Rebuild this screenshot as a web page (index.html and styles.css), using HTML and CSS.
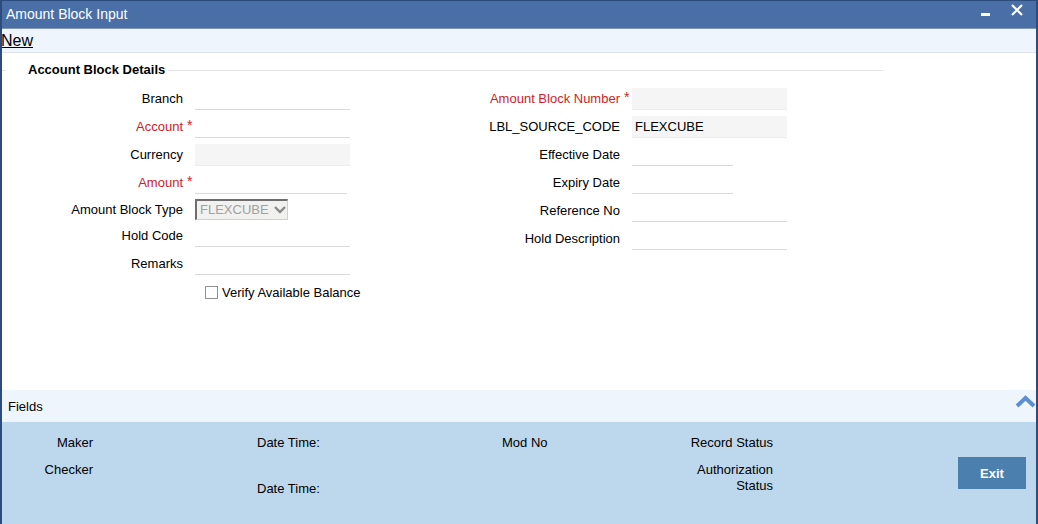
FILE: index.html
```html
<!DOCTYPE html>
<html>
<head>
<meta charset="utf-8">
<link rel="stylesheet" href="styles.css">
</head>
<body>
<div class="window">
  <div class="titlebar">
    <span class="title">Amount Block Input</span>
    <div class="controls">
      <span class="min"></span>
      <svg class="close" width="12" height="12" viewBox="0 0 12 12"><path d="M1 1 L11 11 M11 1 L1 11" stroke="#fff" stroke-width="2.2" fill="none"/></svg>
    </div>
  </div>
  <div class="toolbar"><a class="new">New</a></div>
  <div class="main">
    <div class="legend-row">
      <span class="lead-line"></span>
      <span class="legend">Account Block Details</span>
      <span class="tail-line"></span>
    </div>
    <div class="form">
      <div class="col col1">
        <div class="row"><label class="lbl">Branch</label><span class="star"></span><span class="inp"></span></div>
        <div class="row"><label class="lbl req">Account</label><span class="star">*</span><span class="inp"></span></div>
        <div class="row"><label class="lbl">Currency</label><span class="star"></span><span class="inp ro"></span></div>
        <div class="row"><label class="lbl req">Amount</label><span class="star">*</span><span class="inp short"></span></div>
        <div class="row row-sel"><label class="lbl">Amount Block Type</label><span class="star"></span><span class="select">FLEXCUBE<svg class="caret" width="14" height="10" viewBox="0 0 14 10"><path d="M2 2 L7 7 L12 2" stroke="#8a8a8a" stroke-width="2.4" fill="none"/></svg></span></div>
        <div class="row"><label class="lbl">Hold Code</label><span class="star"></span><span class="inp"></span></div>
        <div class="row"><label class="lbl">Remarks</label><span class="star"></span><span class="inp"></span></div>
        <div class="row"><span class="lbl"></span><span class="star"></span><span class="check"><span class="box"></span>Verify Available Balance</span></div>
      </div>
      <div class="col col2">
        <div class="row"><label class="lbl req">Amount Block Number</label><span class="star">*</span><span class="inp ro"></span></div>
        <div class="row"><label class="lbl">LBL_SOURCE_CODE</label><span class="star"></span><span class="inp ro val">FLEXCUBE</span></div>
        <div class="row"><label class="lbl">Effective Date</label><span class="star"></span><span class="inp date"></span></div>
        <div class="row"><label class="lbl">Expiry Date</label><span class="star"></span><span class="inp date"></span></div>
        <div class="row"><label class="lbl">Reference No</label><span class="star"></span><span class="inp"></span></div>
        <div class="row"><label class="lbl">Hold Description</label><span class="star"></span><span class="inp"></span></div>
      </div>
    </div>
  </div>
  <div class="fields-band">
    <span class="fields">Fields</span>
    <svg class="chev" width="21" height="14" viewBox="0 0 21 14"><path d="M2 12 L10.5 4 L19 12" stroke="#5b8fcf" stroke-width="4" fill="none"/></svg>
  </div>
  <div class="footer">
    <div class="fcol fa"><div>Maker</div><div class="mt11">Checker</div></div>
    <div class="fcol fb"><div>Date Time:</div><div class="mt30">Date Time:</div></div>
    <div class="fcol fc"><div>Mod No</div></div>
    <div class="fcol fd"><div>Record Status</div><div class="mt11">Authorization<br>Status</div></div>
    <button class="exit">Exit</button>
  </div>
</div>
</body>
</html>
```

FILE: styles.css
```css
* { box-sizing: border-box; }
html, body { margin: 0; padding: 0; }
body {
  font-family: "Liberation Sans", Arial, sans-serif;
  font-size: 13px;
  color: #000;
  background: #fff;
}
.window {
  width: 1038px;
  height: 524px;
  display: flex;
  flex-direction: column;
  border-left: 2px solid #2b4c7c;
  border-right: 2px solid #2b4c7c;
  overflow: hidden;
}
.titlebar {
  height: 29px;
  background: #4a6fa6;
  border-top: 1px solid #2b4c7c;
  border-bottom: 1px solid #8397b2;
  display: flex;
  align-items: flex-start;
  justify-content: space-between;
  color: #fff;
}
.title {
  font-size: 14px;
  line-height: 16px;
  margin-top: 5px;
  margin-left: 4px;
}
.controls {
  display: flex;
  align-items: flex-start;
  margin-right: 13px;
}
.min {
  width: 9px;
  height: 3px;
  background: #fff;
  margin-top: 12px;
  margin-right: 21px;
}
.close { margin-top: 3px; display: block; }
.toolbar {
  height: 24px;
  background: #eef5fd;
  border-bottom: 1px solid #e0e4ea;
  display: flex;
  align-items: center;
}
.new {
  font-size: 16px;
  text-decoration: underline;
  line-height: 18px;
  margin-left: -1px;
  color: #000;
}
.main {
  flex: 1;
  padding-top: 9px;
}
.legend-row {
  width: 881px;
  height: 16px;
  display: flex;
  align-items: center;
}
.lead-line, .tail-line {
  height: 1px;
  background: #e4e4e4;
}
.lead-line { width: 3px; }
.tail-line { flex: 1; }
.legend {
  font-weight: bold;
  padding-left: 23px;
  padding-right: 3px;
  line-height: 16px;
}
.form {
  display: flex;
  margin-top: 7px;
}
.col {
  display: flex;
  flex-direction: column;
}
.row {
  display: grid;
  height: 28px;
  align-items: center;
}
.col1 .row { grid-template-columns: 181px 12px 155px; }
.col1 .row-sel { height: 25px; }
.col2 .row { grid-template-columns: 270px 12px 155px; }
.lbl {
  text-align: right;
  line-height: 16px;
  white-space: nowrap;
}
.req { color: #d01c27; }
.star {
  color: #d01c27;
  font-size: 14px;
  line-height: 10px;
  padding-left: 4px;
  align-self: start;
  margin-top: 7px;
}
.inp {
  height: 22px;
  background: #fff;
  border-bottom: 1px solid #dadada;
  line-height: 22px;
  padding-left: 3px;
}
.inp.ro {
  background: #f5f5f5;
  border-bottom: 1px solid #ececec;
}
.inp.short { width: 152px; }
.inp.date { width: 101px; }
.select {
  width: 93px;
  height: 21px;
  background: #f1f1ef;
  border-top: 2px solid #6e6e6e;
  border-left: 2px solid #6e6e6e;
  border-right: 1px solid #d0d0d0;
  border-bottom: 1px solid #d0d0d0;
  color: #a0a0a0;
  display: flex;
  align-items: center;
  padding-left: 3px;
  line-height: 16px;
}
.caret { margin-left: 4px; }
.check {
  display: flex;
  align-items: center;
  white-space: nowrap;
  width: max-content;
  margin-left: 10px;
}
.box {
  flex-shrink: 0;
  width: 13px;
  height: 13px;
  border: 1px solid #8f8f8f;
  background: #fff;
  margin-right: 4px;
}
.fields-band {
  height: 32px;
  background: #eef5fd;
  display: flex;
  justify-content: space-between;
  align-items: flex-start;
}
.fields {
  margin-left: 6px;
  margin-top: 9px;
  line-height: 16px;
}
.chev { margin-top: 4px; display: block; }
.footer {
  height: 102px;
  background: #bdd8ec;
  display: flex;
  align-items: flex-start;
  padding-top: 13px;
  line-height: 16px;
}
.fcol { display: flex; flex-direction: column; }
.fa { width: 91px; text-align: right; }
.fb { margin-left: 164px; width: 245px; }
.fc { width: 150px; }
.fd { width: 121px; text-align: right; }
.mt11 { margin-top: 11px; }
.mt30 { margin-top: 30px; }
.exit {
  margin-left: 185px;
  margin-top: 22px;
  width: 68px;
  height: 32px;
  background: #4a7fae;
  color: #fff;
  border: none;
  font-family: "Liberation Sans", Arial, sans-serif;
  font-size: 13px;
  font-weight: bold;
  padding: 0;
}
```
